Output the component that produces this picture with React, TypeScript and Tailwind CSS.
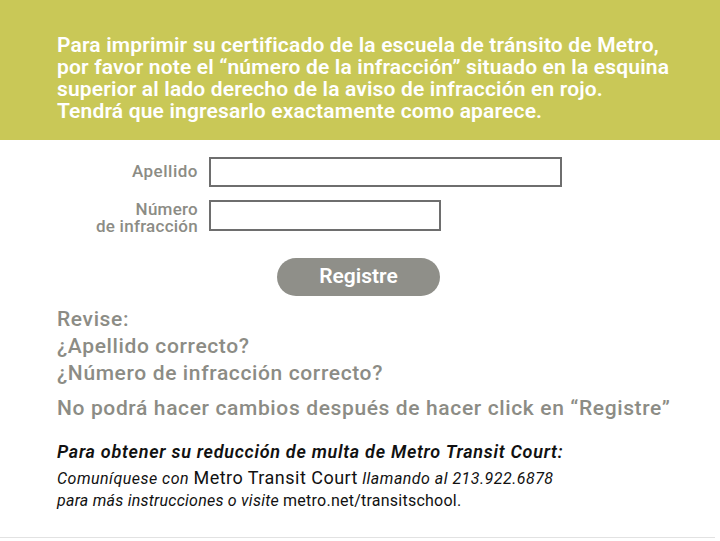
import React from 'react';

const font = { fontFamily: '"Roboto", "Liberation Sans", sans-serif' };

const App = () => {
    return (
        <div className="w-[720px] h-[541px] bg-white overflow-hidden" style={font}>
            {/* Header band */}
            <div className="h-[140px] bg-[#c9c857] pl-[57px] pt-[34px]">
                <p className="text-white text-[21px] leading-[22px] font-semibold tracking-[0.008em]">
                    Para imprimir su certificado de la escuela de tránsito de Metro,<br />
                    por favor note el “número de la infracción” situado en la esquina<br />
                    superior al lado derecho de la aviso de infracción en rojo.<br />
                    Tendrá que ingresarlo exactamente como aparece.
                </p>
            </div>

            {/* Form */}
            <div className="pt-[17px]">
                <div className="flex items-center">
                    <label className="w-[198px] text-right text-[#8c8c85] text-[17px] font-medium tracking-[0.03em]">Apellido</label>
                    <div className="ml-[11px] w-[353px] h-[30px] border-2 border-[#6e6e6e]" />
                </div>
                <div className="flex items-start mt-[13px]">
                    <label className="w-[198px] mt-[1px] text-right text-[#8c8c85] text-[17px] leading-[17px] font-medium tracking-[0.015em]">
                        Número<br />de infracción
                    </label>
                    <div className="ml-[11px] w-[232px] h-[31px] border-2 border-[#6e6e6e]" />
                </div>
                <div className="flex mt-[23px] pl-[277px]">
                    <button className="w-[163px] h-[38px] rounded-full bg-[#8f8f89] text-white text-[21px] font-semibold">
                        Registre
                    </button>
                </div>
            </div>

            {/* Reminders */}
            <div className="pl-[57px] pt-[10px] text-[#8c8c85] text-[21px] font-medium tracking-[0.03em]">
                <p className="leading-[27px]">Revise:</p>
                <p className="leading-[27px]">¿Apellido correcto?</p>
                <p className="leading-[27px]">¿Número de infracción correcto?</p>
                <p className="leading-[27px] mt-[8px]">No podrá hacer cambios después de hacer click en “Registre”</p>
            </div>

            {/* Contact */}
            <div className="pl-[57px] pt-[18px] text-[#111] pb-[26px] border-b border-[#e2e2e2] w-[715px]">
                <p className="italic font-semibold text-[18px] leading-[24px] tracking-[0.04em]">
                    Para obtener su reducción de multa de Metro Transit Court:
                </p>
                <p className="text-[16px] leading-[23px] mt-[2px] tracking-[0.03em]">
                    <span className="italic">Comuníquese con </span>
                    <span className="text-[18px] font-normal">Metro Transit Court</span>
                    <span className="italic"> llamando al 213.922.6878</span>
                </p>
                <p className="text-[16px] leading-[21px] tracking-[0.015em]">
                    <span className="italic">para más instrucciones o visite </span>
                    <span className="text-[16px]">metro.net/transitschool.</span>
                </p>
            </div>
        </div>
    );
};

export default App;
